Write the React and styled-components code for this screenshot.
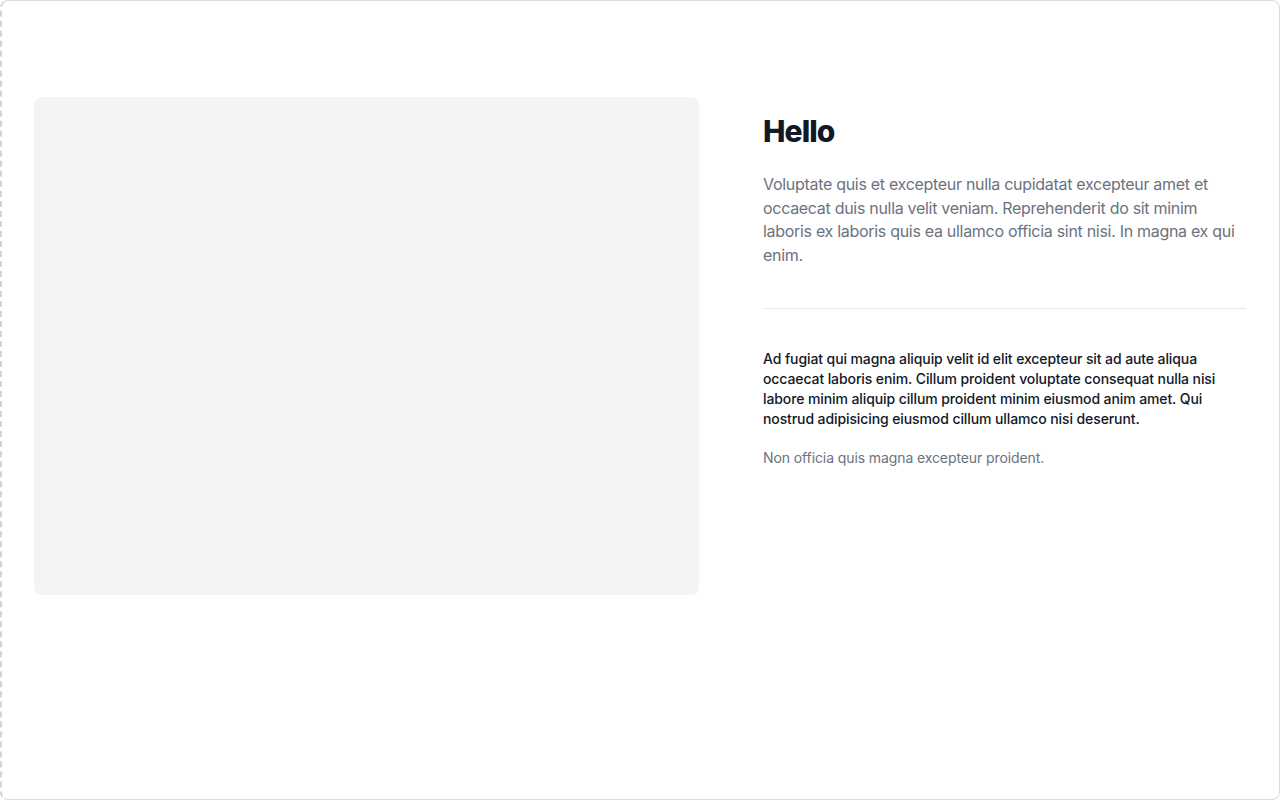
import React from "react";
import styled, { createGlobalStyle } from "styled-components";

const GlobalStyle = createGlobalStyle`
  html, body {
    margin: 0;
    padding: 0;
    background: #ffffff;
  }
  body {
    font-family: Inter, "Noto Sans", sans-serif;
    -webkit-font-smoothing: antialiased;
  }
  * {
    box-sizing: border-box;
  }
`;

const Frame = styled.div`
  width: 1280px;
  height: 800px;
  border: 1px solid #dcdcdc;
  border-left: 2px dashed #d4d4d4;
  border-radius: 8px;
  background: #ffffff;
  overflow: hidden;
`;

const Section = styled.section`
  display: grid;
  grid-template-columns: 665px 1fr;
  column-gap: 64px;
  padding: 96px 33px 0 32px;
  align-items: start;
`;

const ImageBox = styled.div`
  height: 498px;
  border-radius: 8px;
  background: #f3f4f6;
`;

const Content = styled.div`
  display: flex;
  flex-direction: column;
  padding-top: 16px;
`;

const Title = styled.h2`
  margin: 0;
  font-size: 30px;
  line-height: 36px;
  font-weight: 800;
  letter-spacing: -0.03em;
  color: #111827;
`;

const Lead = styled.p`
  margin: 24px 0 0;
  font-size: 16px;
  line-height: 23.7px;
  letter-spacing: -0.3px;
  color: #6b7280;
`;

const Divider = styled.hr`
  margin: 40px 0 0;
  border: 0;
  border-top: 1px solid #e5e7eb;
`;

const Body = styled.p`
  margin: ${(p) => p.$gap}px 0 0;
  font-size: 14px;
  line-height: 20px;
  letter-spacing: -0.1px;
  font-weight: ${(p) => (p.$strong ? 500 : 400)};
  color: ${(p) => (p.$strong ? "#111827" : "#6b7280")};
`;

export default function App() {
  return (
    <>
      <GlobalStyle />
      <Frame>
        <Section>
          <ImageBox />
          <Content>
            <Title>Hello</Title>
            <Lead>
              Voluptate quis et excepteur nulla cupidatat excepteur amet et
              occaecat duis nulla velit veniam. Reprehenderit do sit minim
              laboris ex laboris quis ea ullamco officia sint nisi. In magna ex
              qui enim.
            </Lead>
            <Divider />
            <Body $strong $gap={40}>
              Ad fugiat qui magna aliquip velit id elit excepteur sit ad aute
              aliqua occaecat laboris enim. Cillum proident voluptate consequat
              nulla nisi labore minim aliquip cillum proident minim eiusmod anim
              amet. Qui nostrud adipisicing eiusmod cillum ullamco nisi
              deserunt.
            </Body>
            <Body $gap={19}>Non officia quis magna excepteur proident.</Body>
          </Content>
        </Section>
      </Frame>
    </>
  );
}
